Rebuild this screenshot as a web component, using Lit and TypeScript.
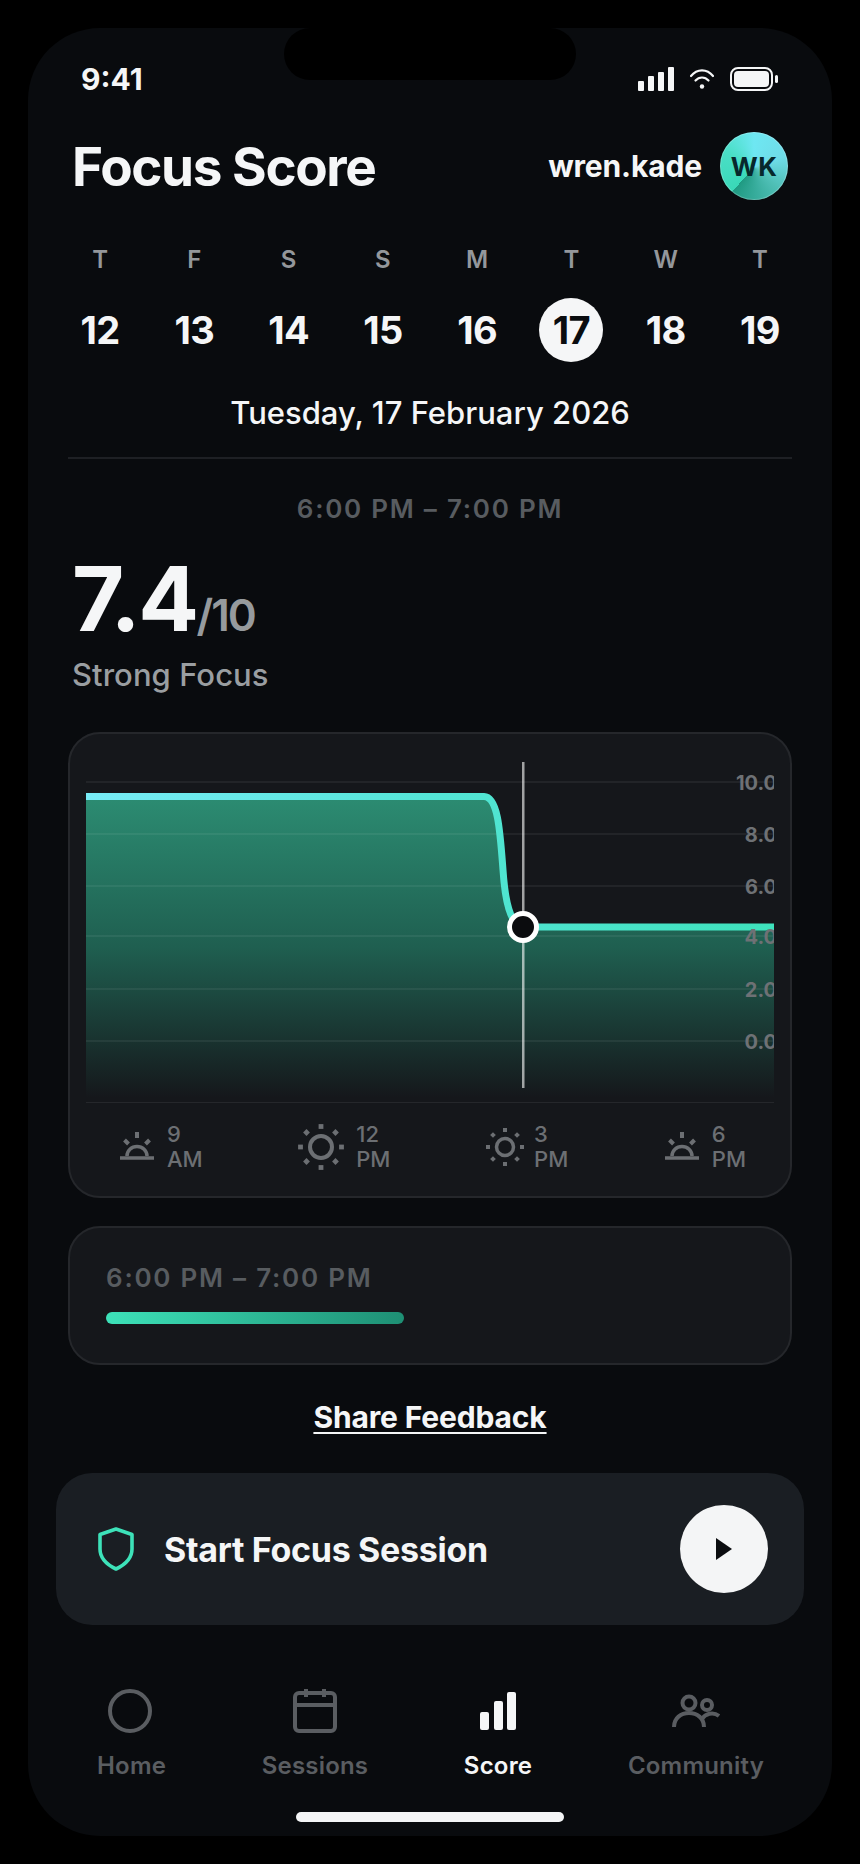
import { LitElement, html, css, svg } from "lit";
import { customElement } from "lit/decorators.js";

const DAYS = [["T",12],["F",13],["S",14],["S",15],["M",16],["T",17],["W",18],["T",19]] as const;

const sunrise = svg`<svg class="tick-ic" width="36" height="30" viewBox="0 0 36 30" fill="none" stroke="currentColor"><path d="M18 0v6" stroke-width="4"/><path d="M5.500 8l4 4M30.500 8l-4 4" stroke-width="4"/><path d="M8 24a10 9.500 0 0 1 20 0" stroke-width="3.500"/><path d="M1 26h34" stroke-width="3.500"/></svg>`;
const sun = (size: number, r: number, ro: number, rd: number, sw: number) => {
  const c = size / 2;
  const rays = [0, 45, 90, 135, 180, 225, 270, 315].map((a) => {
    const t = (a * Math.PI) / 180;
    const x = c + ro * Math.cos(t), y = c + ro * Math.sin(t);
    const rot = a % 90 === 0 ? 0 : 45;
    return svg`<rect x=${x - rd} y=${y - rd} width=${rd * 2} height=${rd * 2} transform="rotate(${rot} ${x} ${y})" fill="currentColor"/>`;
  });
  return svg`<svg class="tick-ic" width=${size} height=${size} viewBox="0 0 ${size} ${size}" fill="none"><circle cx=${c} cy=${c} r=${r} stroke="currentColor" stroke-width=${sw}/>${rays}</svg>`;
};

@customElement("app-root")
export class AppRoot extends LitElement {
  static styles = css`
    :host { display: block; width: 860px; height: 1864px; background: #000; padding: 28px; box-sizing: border-box; font-family: Inter, "Noto Sans", sans-serif; color: #f5f6f7; overflow: hidden; }
    * { box-sizing: border-box; }
    .phone { position: relative; width: 804px; height: 1808px; border-radius: 72px; background: #090b0e; overflow: hidden; }
    .island { position: absolute; top: 0; left: 256px; width: 292px; height: 52px; background: #000; border-radius: 26px; }
    .status { display: flex; justify-content: space-between; align-items: center; height: 24px; margin-top: 39px; padding: 0 54px 0 53px; }
    .time { font-size: 30px; font-weight: 700; line-height: 24px; }
    .st-icons { display: flex; align-items: center; gap: 16px; }
    .header { display: flex; justify-content: space-between; align-items: center; margin-top: 41px; padding: 0 44px; height: 68px; }
    .title { font-size: 53px; font-weight: 700; letter-spacing: -1.4px; line-height: 68px; padding-top: 1px; }
    .user { display: flex; align-items: center; gap: 18px; }
    .uname { font-size: 30px; font-weight: 700; letter-spacing: -.15px; }
    .avatar { width: 68px; height: 68px; border-radius: 50%; display: flex; align-items: center; justify-content: center; font-size: 26px; font-weight: 700; color: #07282c; letter-spacing: .3px;
      background: conic-gradient(from 0deg at 50% 52%, #6ee7f2 0deg, #6fdce8 70deg, #4fbfb6 130deg, #1f9a82 222deg, #3ad8b8 222deg, #4adfc6 300deg, #6ee7f2 360deg); box-shadow: inset 0 0 0 1px rgba(255,255,255,.22); }
    .week { display: grid; grid-template-columns: repeat(8, 1fr); margin: 47px 25px 0; }
    .day { display: flex; flex-direction: column; align-items: center; }
    .dl { font-size: 24px; font-weight: 600; line-height: 26px; color: #94979b; }
    .dn { margin-top: 25px; width: 64px; height: 64px; border-radius: 50%; display: flex; align-items: center; justify-content: center; font-size: 38px; font-weight: 700; letter-spacing: -.6px; }
    .dn.sel { background: #f5f6f7; color: #0a0c0f; }
    .date { margin-top: 33px; text-align: center; font-size: 31px; font-weight: 500; line-height: 36px; height: 36px; }
    .rule { margin: 26px 40px 0; height: 2px; background: #1e2024; }
    .range { font-size: 26px; font-weight: 600; letter-spacing: 1.75px; color: #585c60; line-height: 32px; }
    .range.c { margin-top: 34px; text-align: center; }
    .score { display: flex; align-items: baseline; margin: 33px 0 0 44px; height: 82px; }
    .big { font-size: 90px; font-weight: 700; letter-spacing: -2.500px; line-height: 82px; }
    .of { font-size: 44px; font-weight: 600; letter-spacing: -2px; color: #969a9d; }
    .cap { margin: 15px 0 0 44px; font-size: 31px; font-weight: 500; letter-spacing: .05px; color: #9a9ea1; line-height: 40px; }
    .card { background: #15171b; border: 2px solid #25272b; border-radius: 32px; margin: 0 40px; }
    .chart { margin-top: 37px; height: 466px; padding: 0 16px; }
    .chart svg.plot { display: block; margin-top: 23px; overflow: hidden; }
    .ticks { display: flex; justify-content: space-between; padding: 19px 28px 0 33px; color: #6c6f73; }
    .tick { display: flex; align-items: center; gap: 12px; font-size: 22px; font-weight: 500; line-height: 25px; }
    .tick.tight { gap: 10px; }
    .slot { margin-top: 28px; height: 139px; padding: 34px 36px 0; }
    .bar { margin-top: 18px; width: 298px; height: 12px; border-radius: 6px; background: linear-gradient(90deg, #3de2b9, #1e8f74); }
    .share { display: block; margin-top: 34px; text-align: center; font-size: 30px; font-weight: 700; letter-spacing: -.15px; line-height: 36px; text-decoration: underline; text-underline-offset: 4px; text-decoration-thickness: 2px; }
    .cta { margin: 38px 28px 0; height: 152px; border-radius: 36px; background: #1a1e23; display: flex; align-items: center; padding: 0 36px 0 42px; }
    .cta-t { margin-left: 30px; font-size: 34px; font-weight: 700; letter-spacing: -.3px; flex: 1; }
    .play { width: 88px; height: 88px; border-radius: 50%; background: #f4f5f6; display: flex; align-items: center; justify-content: center; }
    .nav { display: flex; justify-content: space-between; padding: 0 68px 0 69px; margin-top: 64px; color: #5a5d61; }
    .it { display: flex; flex-direction: column; align-items: center; font-size: 24px; font-weight: 600; letter-spacing: .2px; }
    .it.on { color: #f5f6f7; }
    .ni { height: 44px; display: flex; align-items: center; justify-content: center; }
    .ni.h { margin-right: 3px; }
    .it span { margin-top: 17px; line-height: 32px; }
    .home { position: absolute; left: 268px; top: 1784px; width: 268px; height: 10px; border-radius: 5px; background: #f4f5f6; }
  `;

  render() {
    const hl = [782, 834, 886, 936, 989, 1041].map((y) => y - 757);
    const labs = ["10.0", "8.0", "6.0", "4.0", "2.0", "0.0"];
    const off = -757;
    const Y = (v: number) => v + off;
    const curve = `M0 ${Y(796.5)} H398 C412 ${Y(797)} 414 ${Y(830)} 417 ${Y(870)} C419 ${Y(900)} 424 ${Y(925)} 437 ${Y(927)} H688`;
    return html`<div class="phone">
      <div class="island"></div>
      <div class="status">
        <div class="time">9:41</div>
        <div class="st-icons">
          <svg width="36" height="24" viewBox="0 0 36 24" fill="#f5f6f7"><rect x="0" y="14" width="6" height="10" rx="1"/><rect x="10" y="9" width="6" height="15" rx="1"/><rect x="20" y="5" width="6" height="19" rx="1"/><rect x="30" y="0" width="6" height="24" rx="1"/></svg>
          <svg width="24" height="20" viewBox="0 0 24 20" fill="none" stroke="#f5f6f7" stroke-width="2.200" stroke-linecap="round"><path d="M1 7C7-.5 17-.5 23 7"/><path d="M5.500 11.500c3.600-4 9.400-4 13 0"/><circle cx="12" cy="17.500" r="2.200" fill="#f5f6f7" stroke="none"/></svg>
          <svg width="48" height="24" viewBox="0 0 48 24" fill="none"><rect x="1" y="1" width="41" height="22" rx="7" stroke="#f5f6f7" stroke-width="2"/><rect x="4" y="4" width="35" height="16" rx="4" fill="#f5f6f7"/><rect x="45" y="8" width="3" height="8" rx="1.500" fill="#f5f6f7"/></svg>
        </div>
      </div>
      <div class="header">
        <div class="title">Focus Score</div>
        <div class="user"><div class="uname">wren.kade</div><div class="avatar">WK</div></div>
      </div>
      <div class="week">
        ${DAYS.map(([l, n]) => html`<div class="day"><div class="dl">${l}</div><div class="dn ${n === 17 ? "sel" : ""}">${n}</div></div>`)}
      </div>
      <div class="date">Tuesday, 17 February 2026</div>
      <div class="rule"></div>
      <div class="range c">6:00 PM – 7:00 PM</div>
      <div class="score"><span class="big">7.4</span><span class="of">/10</span></div>
      <div class="cap">Strong Focus</div>
      <div class="card chart">
        <svg class="plot" width="688" height="346" viewBox="0 0 688 346">
          <defs>
            <linearGradient id="f" x1="0" y1="${Y(796)}" x2="0" y2="${Y(1098)}" gradientUnits="userSpaceOnUse"><stop offset="0" stop-color="#2c8c72"/><stop offset=".5" stop-color="#1f5f50"/><stop offset="1" stop-color="#15171b"/></linearGradient>
            <linearGradient id="s" x1="0" y1="0" x2="688" y2="0" gradientUnits="userSpaceOnUse"><stop offset="0" stop-color="#78ecf6"/><stop offset=".5" stop-color="#54e5d6"/><stop offset="1" stop-color="#3ee2bc"/></linearGradient>
          </defs>
          <path d="${curve} V${Y(1098)} H0 Z" fill="url(#f)"/>
          ${hl.map((y) => svg`<path d="M0 ${y}H688" stroke="#fff" stroke-opacity=".08" stroke-width="1.500"/>`)}
          <path d="${curve}" fill="none" stroke="url(#s)" stroke-width="7"/>
          <rect x="436" y="5" width="2.500" height="326" fill="#fff" fill-opacity=".6"/>
          <circle cx="437" cy="${Y(927)}" r="13.500" fill="#0b0c0e" stroke="#fff" stroke-width="5"/>
          ${hl.map((y, i) => svg`<text x="691" y=${y + 7.5} text-anchor="end" font-size="20" font-weight="700" fill="#6e7175">${labs[i]}</text>`)}
          <path d="M0 ${1103 + off}H688" stroke="#fff" stroke-opacity=".07" stroke-width="2"/>
        </svg>
        <div class="ticks">
          <div class="tick">${sunrise}<div>9<br/>AM</div></div>
          <div class="tick">${sun(46, 11, 20.5, 2.4, 4)}<div>12<br/>PM</div></div>
          <div class="tick tight">${sun(38, 8.5, 17, 2, 3.5)}<div>3<br/>PM</div></div>
          <div class="tick">${sunrise}<div>6<br/>PM</div></div>
        </div>
      </div>
      <div class="card slot">
        <div class="range">6:00 PM – 7:00 PM</div>
        <div class="bar"></div>
      </div>
      <a class="share">Share Feedback</a>
      <div class="cta">
        <svg width="36" height="44" viewBox="0 0 36 44" fill="none" stroke="#3de2b9" stroke-width="3.600" stroke-linejoin="round"><path d="M18 2 34 7.500V22c0 9-6.500 15.500-16 20C8.500 37.500 2 31 2 22V7.500Z"/></svg>
        <div class="cta-t">Start Focus Session</div>
        <div class="play"><svg width="16" height="22" viewBox="0 0 16 22" fill="#0a0c0f"><path d="M0 0 16 11 0 22Z"/></svg></div>
      </div>
      <div class="nav">
        <div class="it"><div class="ni h"><svg width="44" height="44" viewBox="0 0 44 44" fill="none" stroke="currentColor" stroke-width="4"><circle cx="22" cy="22" r="20"/></svg></div><span>Home</span></div>
        <div class="it"><div class="ni"><svg width="44" height="44" viewBox="0 0 44 44" fill="none" stroke="currentColor" stroke-width="4"><rect x="2" y="4" width="40" height="38" rx="4"/><path d="M2 16h40M13 0v8M31 0v8"/></svg></div><span>Sessions</span></div>
        <div class="it on"><div class="ni"><svg width="36" height="38" viewBox="0 0 36 38" fill="currentColor"><rect x="0" y="20" width="9" height="18" rx="2"/><rect x="14" y="9" width="9" height="29" rx="2"/><rect x="27" y="0" width="9" height="38" rx="2"/></svg></div><span>Score</span></div>
        <div class="it"><div class="ni"><svg width="48" height="34" viewBox="0 0 48 34" fill="none" stroke="currentColor" stroke-width="4"><circle cx="17" cy="9" r="6.500"/><circle cx="35" cy="11" r="5"/><path d="M2 33c0-9 7-14 15-14s15 5 15 14"/><path d="M30 25c3-5 11-8 17-3"/></svg></div><span>Community</span></div>
      </div>
      <div class="home"></div>
    </div>`;
  }
}
